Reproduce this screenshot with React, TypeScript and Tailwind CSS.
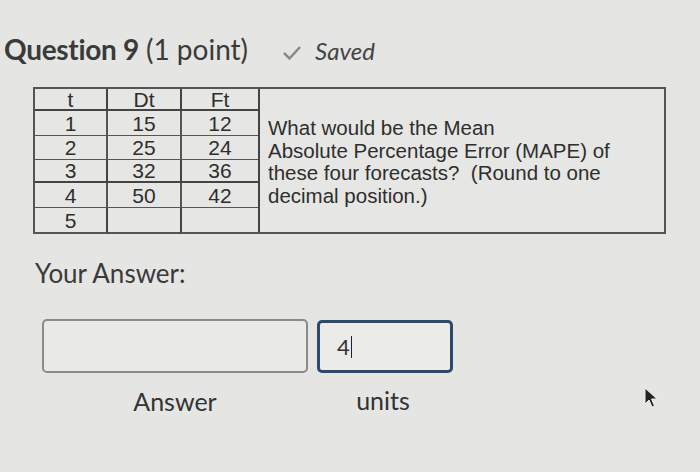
import React from "react";

const rows = [
  ["1", "15", "12"],
  ["2", "25", "24"],
  ["3", "32", "36"],
  ["4", "50", "42"],
  ["5", "", ""],
];

export default function App() {
  return (
    <div className="w-[700px] h-[472px] overflow-hidden bg-[#e5e5e3] text-[#333] relative" style={{ fontFamily: "Lato, 'Open Sans', sans-serif" }}>
      <div className="flex items-baseline pl-[4px] pt-[28px] h-[87px]">
        <span className="text-[28px] font-bold text-[#3a3a3a] tracking-[-0.3px]">Question 9</span>
        <span className="text-[28px] text-[#3a3a3a] ml-[7px]">(1 point)</span>
        <svg className="ml-[34px] self-center mt-[-10px]" width="20" height="16" viewBox="0 0 20 16">
          <path d="M2 8 L7.5 13.5 L18 2" fill="none" stroke="#8a8a8a" strokeWidth="2.5" />
        </svg>
        <span className="ml-[13px] text-[24px] italic text-[#444]">Saved</span>
      </div>

      <div className="ml-[33px] w-[633px] h-[147px] border-2 border-[#555] flex bg-[#e6e6e4]" style={{ fontFamily: "'Liberation Sans', Arial, sans-serif" }}>
        <div className="grid grid-cols-[73px_74px_76px] grid-rows-[22px_25px_24px_23px_25px_25px] border-r-2 border-[#444] text-[21px] text-[#2e2e2e] leading-none">
          {["t", "Dt", "Ft"].map((h, i) => (
            <div key={h} className={`flex items-center justify-center border-b-2 border-[#444] ${i < 2 ? "border-r-2" : ""}`}>{h}</div>
          ))}
          {rows.map((r, ri) =>
            r.map((c, ci) => (
              <div key={`${ri}-${ci}`} className={`flex items-center justify-center ${ri < 4 ? (ri === 2 ? "border-b-2 border-[#444]" : "border-b border-[#555]") : ""} ${ci < 2 ? "border-r-2 border-[#444]" : ""}`}>{c}</div>
            ))
          )}
        </div>
        <div className="pl-[8px] pt-[28px] text-[20.5px] leading-[22.5px] text-[#2e2e2e]">
          What would be the Mean<br />
          Absolute Percentage Error (MAPE) of<br />
          these four forecasts?&nbsp; (Round to one<br />
          decimal position.)
        </div>
      </div>

      <div className="ml-[35px] mt-[20px] text-[26px] text-[#3a3a3a]">Your Answer:</div>

      <div className="flex ml-[42px] mt-[26px] gap-[9px]">
        <div className="flex flex-col items-center">
          <div className="w-[266px] h-[54px] rounded-[5px] border-2 border-[#8a8a8a] bg-[#e9e9e7]" />
          <div className="mt-[10px] text-[25px] text-[#333]">Answer</div>
        </div>
        <div className="flex flex-col items-center">
          <div className="w-[136px] h-[53px] rounded-[5px] border-[3px] border-[#2c4a6e] bg-[#ebebe9] flex items-center pl-[17px] mt-[1px]">
            <span className="text-[22px] text-[#333]">4</span>
            <span className="w-[1.5px] h-[22px] bg-[#222] ml-[1px]" />
          </div>
          <div className="mt-[9px] text-[25px] text-[#333] ml-[-4px]">units</div>
        </div>
      </div>

      <svg className="absolute left-[644px] top-[387px]" width="16" height="22" viewBox="0 0 16 22">
        <path d="M1 1 L1 17 L5 13 L8 20 L10.5 19 L7.5 12 L13 12 Z" fill="#222" stroke="#eee" strokeWidth="1" />
      </svg>
    </div>
  );
}
